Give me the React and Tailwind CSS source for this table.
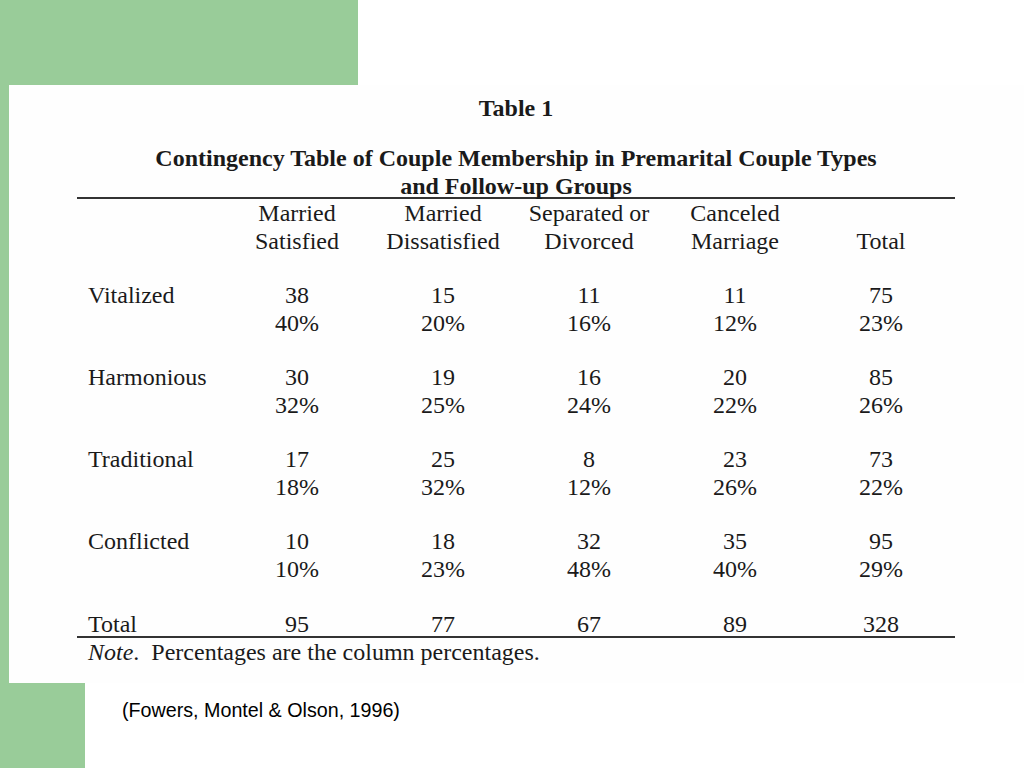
const rows = [
  { label: 'Vitalized', n: ['38', '15', '11', '11', '75'], p: ['40%', '20%', '16%', '12%', '23%'] },
  { label: 'Harmonious', n: ['30', '19', '16', '20', '85'], p: ['32%', '25%', '24%', '22%', '26%'] },
  { label: 'Traditional', n: ['17', '25', '8', '23', '73'], p: ['18%', '32%', '12%', '26%', '22%'] },
  { label: 'Conflicted', n: ['10', '18', '32', '35', '95'], p: ['10%', '23%', '48%', '40%', '29%'] },
]

const heads = [
  ['Married', 'Satisfied'],
  ['Married', 'Dissatisfied'],
  ['Separated or', 'Divorced'],
  ['Canceled', 'Marriage'],
  ['', 'Total'],
]

const cols = 'grid grid-cols-[147px_146px_146px_146px_146px_146px]'

function App() {
  return (
    <div className="w-[1024px] h-[768px] bg-white flex flex-col overflow-hidden">
      <div className="h-[85px] w-[358px] bg-[#99cc99]" />
      <div className="flex h-[598px]">
        <div className="w-[9px] bg-[#99cc99]" />
        <div className="flex-1 bg-[#fefefe] pl-[68px] text-[#1a1a1a] font-['Liberation_Serif',serif]">
          <div className="w-[878px]">
            <h1 className="pt-[9px] text-center text-[24px] font-bold leading-[28px]">Table 1</h1>
            <h2 className="mt-[22px] text-center text-[24px] font-bold leading-[28px]">
              Contingency Table of Couple Membership in Premarital Couple Types
              <br />
              and Follow-up Groups
            </h2>
            <div className="border-t-2 border-[#333] mt-[-3px]" />
            <div className={`${cols} text-[24px] leading-[28px]`}>
              <div />
              {heads.map((h, i) => (
                <div key={i} className="text-center">
                  <div className="h-[28px]">{h[0]}</div>
                  <div>{h[1]}</div>
                </div>
              ))}
            </div>
            {rows.map((r) => (
              <div key={r.label} className={`${cols} text-[24px] leading-[28px] mt-[26px]`}>
                <div className="pl-[11px]">{r.label}</div>
                {r.n.map((v, i) => (
                  <div key={i} className="text-center">
                    <div>{v}</div>
                    <div>{r.p[i]}</div>
                  </div>
                ))}
              </div>
            ))}
            <div className={`${cols} text-[24px] leading-[28px] mt-[27px]`}>
              <div className="pl-[11px]">Total</div>
              {['95', '77', '67', '89', '328'].map((v, i) => (
                <div key={i} className="text-center">{v}</div>
              ))}
            </div>
            <div className="border-t-2 border-[#333] mt-[-2px]" />
            <p className="pl-[11px] text-[24px] leading-[28px]">
              <i>Note</i>.&nbsp; Percentages are the column percentages.
            </p>
          </div>
        </div>
      </div>
      <div className="flex h-[85px]">
        <div className="w-[85px] bg-[#99cc99]" />
        <p className="pl-[37px] pt-[15px] text-[19.7px] leading-[24px] text-black font-['Liberation_Sans',Arial,sans-serif]">
          (Fowers, Montel &amp; Olson, 1996)
        </p>
      </div>
    </div>
  )
}

export default App
